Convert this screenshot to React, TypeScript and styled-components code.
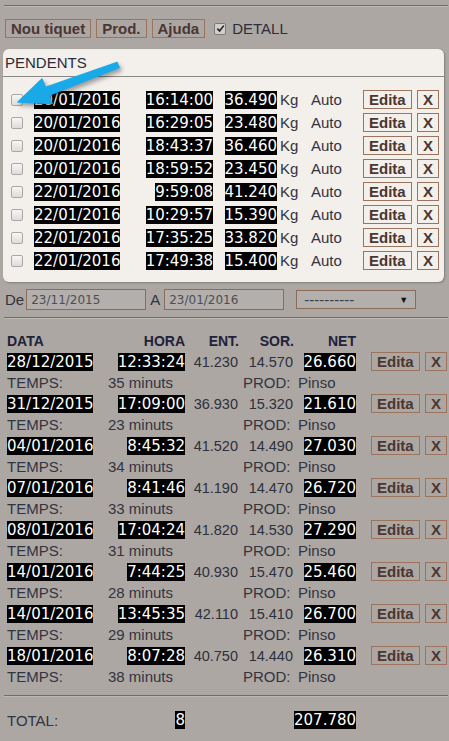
import React from "react";
import styled, { createGlobalStyle } from "styled-components";

const pending = [
  ["20/01/2016", "16:14:00", "36.490"],
  ["20/01/2016", "16:29:05", "23.480"],
  ["20/01/2016", "18:43:37", "36.460"],
  ["20/01/2016", "18:59:52", "23.450"],
  ["22/01/2016", "9:59:08", "41.240"],
  ["22/01/2016", "10:29:57", "15.390"],
  ["22/01/2016", "17:35:25", "33.820"],
  ["22/01/2016", "17:49:38", "15.400"],
];

const records = [
  ["28/12/2015", "12:33:24", "41.230", "14.570", "26.660", "35"],
  ["31/12/2015", "17:09:00", "36.930", "15.320", "21.610", "23"],
  ["04/01/2016", "8:45:32", "41.520", "14.490", "27.030", "34"],
  ["07/01/2016", "8:41:46", "41.190", "14.470", "26.720", "33"],
  ["08/01/2016", "17:04:24", "41.820", "14.530", "27.290", "31"],
  ["14/01/2016", "7:44:25", "40.930", "15.470", "25.460", "28"],
  ["14/01/2016", "13:45:35", "42.110", "15.410", "26.700", "29"],
  ["18/01/2016", "8:07:28", "40.750", "14.440", "26.310", "38"],
];

export default function App() {
  return (
    <>
      <GlobalStyle />
      <Page>
        <Rule />
        <Toolbar>
          <Btn>Nou tiquet</Btn>
          <Btn>Prod.</Btn>
          <Btn>Ajuda</Btn>
          <CheckLabel>
            <FakeCheck>
              <svg viewBox="0 0 10 10" width="9" height="9">
                <path d="M1.5 5.2 L4 7.8 L8.6 1.8" fill="none" stroke="#222" strokeWidth="1.8" />
              </svg>
            </FakeCheck>
            DETALL
          </CheckLabel>
        </Toolbar>

        <Panel>
          <PanelTitle>PENDENTS</PanelTitle>
          <PendingList>
            {pending.map((p, i) => (
              <PendRow key={i}>
                <Check type="checkbox" />
                <span>
                  <Mark>{p[0]}</Mark>
                </span>
                <Right>
                  <Mark>{p[1]}</Mark>
                </Right>
                <Right>
                  <Mark>{p[2]}</Mark>
                </Right>
                <Unit>Kg</Unit>
                <Plain>Auto</Plain>
                <span>
                  <Btn>Edita</Btn>
                </span>
                <span>
                  <Btn>X</Btn>
                </span>
              </PendRow>
            ))}
          </PendingList>
        </Panel>

        <FilterRow>
          <Plain>De</Plain>
          <DateInput defaultValue="23/11/2015" $gap={2} />
          <Plain style={{ marginLeft: 4 }}>A</Plain>
          <DateInput defaultValue="23/01/2016" $gap={4} />
          <FakeSelect>
            <span>----------</span>
            <Caret>▼</Caret>
          </FakeSelect>
        </FilterRow>

        <Rule $top={7} />

        <Table>
          <HeadRow>
            <Head>DATA</Head>
            <Head $right>HORA</Head>
            <Head $right>ENT.</Head>
            <Head $right>SOR.</Head>
            <Head $right>NET</Head>
          </HeadRow>
          {records.map((r, i) => (
            <React.Fragment key={i}>
              <RecRow>
                <span>
                  <Mark>{r[0]}</Mark>
                </span>
                <Right>
                  <Mark>{r[1]}</Mark>
                </Right>
                <Num>{r[2]}</Num>
                <Num>{r[3]}</Num>
                <Right>
                  <Mark>{r[4]}</Mark>
                </Right>
                <span />
                <span>
                  <Btn>Edita</Btn>
                </span>
                <span>
                  <Btn>X</Btn>
                </span>
              </RecRow>
              <TempsRow>
                <Plain>TEMPS:</Plain>
                <Plain>{r[5]} minuts</Plain>
                <Plain>PROD:</Plain>
                <Plain>Pinso</Plain>
              </TempsRow>
            </React.Fragment>
          ))}
        </Table>

        <Rule $top={8} />

        <TotalRow>
          <Plain>TOTAL:</Plain>
          <Right>
            <Mark>8</Mark>
          </Right>
          <span />
          <span />
          <Right>
            <Mark>207.780</Mark>
          </Right>
        </TotalRow>

        <Arrow viewBox="0 0 130 112" width="130" height="112">
          <polygon
            points="18,102 42,79 45.4,87.4 117.1,62.4 119.1,67.6 48.6,95.4 52,103.4"
            fill="#19a9e9"
            stroke="#19a9e9"
            strokeWidth="1.5"
            strokeLinejoin="round"
          />
        </Arrow>
      </Page>
    </>
  );
}

const GlobalStyle = createGlobalStyle`
  body {
    margin: 0;
    background: #aca7a3;
    font-family: "Liberation Sans", Arial, sans-serif;
  }
`;

const Page = styled.div`
  position: relative;
  width: 449px;
  min-height: 741px;
  box-sizing: border-box;
  padding: 5px 1px 0 3px;
`;

const Rule = styled.div<{ $top?: number }>`
  height: 1px;
  margin: ${(p) => p.$top ?? 0}px 0 0 1px;
  background: #706c69;
  box-shadow: 0 1px 0 #bcb8b4;
`;

const Toolbar = styled.div`
  display: flex;
  align-items: center;
  gap: 5px;
  margin-top: 13px;
  padding-left: 2px;
`;

const Btn = styled.button`
  font-family: "Liberation Sans", Arial, sans-serif;
  font-size: 15px;
  font-weight: bold;
  color: #4b3631;
  background: transparent;
  border: 1px solid #9c735d;
  border-radius: 0;
  height: 19px;
  line-height: 17px;
  padding: 0 5px;
  margin: 0;
`;

const CheckLabel = styled.label`
  display: flex;
  align-items: center;
  gap: 6px;
  margin-left: 4px;
  font-size: 15px;
  color: #2c2e3c;
`;

const FakeCheck = styled.span`
  width: 10px;
  height: 10px;
  border: 1px solid #7d7a78;
  border-radius: 2px;
  background: #d2d0ce;
  display: flex;
  align-items: center;
  justify-content: center;
`;

const Panel = styled.div`
  margin: 11px 4px 0 0;
  background: #f3efeb;
  border-radius: 6px;
  box-shadow: 1px 1px 2px rgba(0, 0, 0, 0.25);
  padding-bottom: 10px;
`;

const PanelTitle = styled.div`
  padding: 5px 2px 4px;
  font-size: 15px;
  line-height: 18px;
  color: #2a2c3a;
  border-bottom: 1px solid #8a8784;
`;

const PendingList = styled.div`
  padding: 11px 0 0 8px;
`;

const PendRow = styled.div`
  display: grid;
  grid-template-columns: 23px 111px 68px 64px 34px 52px 54px 24px;
  align-items: center;
  height: 23px;
`;

const Check = styled.input`
  appearance: none;
  width: 12px;
  height: 12px;
  margin: 0;
  border: 1px solid #aaa7a4;
  border-radius: 2px;
  background: linear-gradient(#f6f6f6, #dedcda);
`;

const Mark = styled.span`
  background: #000;
  color: #fff;
  font-family: "DejaVu Sans", Verdana, sans-serif;
  font-size: 15px;
  line-height: 18px;
  padding: 0;
`;

const Right = styled.span`
  text-align: right;
`;

const Plain = styled.span`
  font-size: 15px;
  color: #323440;
`;

const Unit = styled(Plain)`
  padding-left: 3px;
`;

const FilterRow = styled.div`
  display: flex;
  align-items: center;
  margin-top: 7px;
  padding-left: 2px;
  height: 21px;
`;

const DateInput = styled.input<{ $gap: number }>`
  box-sizing: border-box;
  width: 120px;
  height: 21px;
  margin: 0 0 0 ${(p) => p.$gap}px;
  padding: 0 0 0 4px;
  border: 1px solid #8c6c58;
  background: #b2afac;
  font-family: "DejaVu Sans", Verdana, sans-serif;
  font-size: 12px;
  color: #4e4e52;
  outline: none;
`;

const FakeSelect = styled.div`
  box-sizing: border-box;
  width: 120px;
  height: 19px;
  margin-left: 12px;
  padding: 0 7px;
  border: 1px solid #8c6c58;
  background: #b2afac;
  display: flex;
  align-items: center;
  justify-content: space-between;
  font-size: 15px;
  color: #3c3c44;
`;

const Caret = styled.span`
  font-size: 9px;
  color: #111;
`;

const Table = styled.div`
  padding: 13px 0 0 4px;
`;

const cols = "110px 68px 54px 55px 62px 15px 54px 23px";

const HeadRow = styled.div`
  display: grid;
  grid-template-columns: ${cols};
  align-items: center;
  height: 20px;
`;

const Head = styled.span<{ $right?: boolean }>`
  font-size: 14px;
  font-weight: bold;
  color: #20223a;
  text-align: ${(p) => (p.$right ? "right" : "left")};
`;

const RecRow = styled.div`
  display: grid;
  grid-template-columns: ${cols};
  align-items: center;
  height: 21px;
`;

const Num = styled.span`
  font-size: 14.5px;
  color: #2e303c;
  text-align: right;
  padding-right: 1px;
`;

const TempsRow = styled.div`
  display: grid;
  grid-template-columns: 101px 135px 55px auto;
  align-items: center;
  height: 21px;
`;

const TotalRow = styled.div`
  display: grid;
  grid-template-columns: ${cols};
  align-items: center;
  height: 20px;
  margin-top: 14px;
  padding-left: 4px;
`;

const Arrow = styled.svg`
  position: absolute;
  left: 0;
  top: 0;
  filter: drop-shadow(2px 3px 2px rgba(0, 0, 0, 0.35));
  pointer-events: none;
`;
